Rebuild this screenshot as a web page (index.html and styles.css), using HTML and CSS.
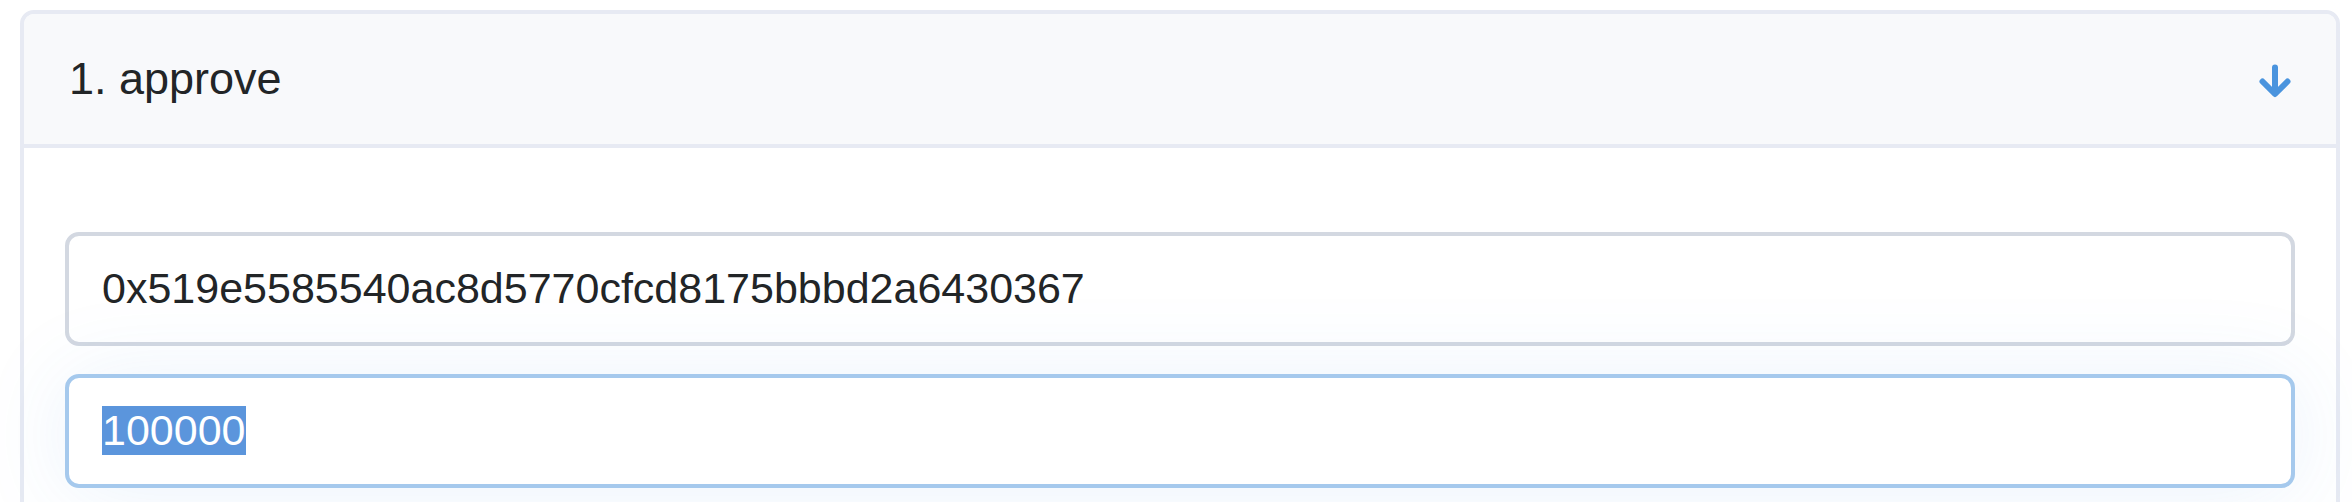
FILE: index.html
```html
<!DOCTYPE html>
<html lang="en">
<head>
<meta charset="utf-8">
<title>Contract functions</title>
<link rel="stylesheet" href="styles.css">
</head>
<body>
<main class="page">
  <section class="card">
    <header class="card-header">
      <h2 class="card-title">1. approve</h2>
      <button class="toggle" type="button" aria-label="Collapse">
        <svg class="toggle-icon" viewBox="0 0 32 34" aria-hidden="true">
          <path d="M16 4.500V29M3.500 18.500L16 31L28.500 18.500"/>
        </svg>
      </button>
    </header>
    <form class="card-body">
      <input class="field" type="text" aria-label="Spender address" value="0x519e5585540ac8d5770cfcd8175bbbd2a6430367">
      <input class="field" id="amount" type="text" aria-label="Amount" value="100000">
    </form>
  </section>
</main>
<script src="script.js"></script>
</body>
</html>
```
FILE: styles.css
```css
* {
  box-sizing: border-box;
}

body {
  margin: 0;
  background: #fff;
  color: #222527;
  font-family: "Liberation Sans", Arial, sans-serif;
}

.page {
  height: 100vh;
  padding: 10px 12px 0 20px;
  overflow: hidden;
}

.card {
  min-height: 100vh;
  border: 4px solid #e7eaf3;
  border-radius: 14px;
}

.card-header {
  display: flex;
  align-items: center;
  justify-content: space-between;
  padding: 39px 45px;
  background: #f8f9fb;
  border-bottom: 4px solid #e7eaf3;
  border-radius: 10px 10px 0 0;
}

.card-title {
  margin: 0;
  font-size: 45px;
  font-weight: 400;
  line-height: 52px;
}

.toggle {
  display: flex;
  padding: 2px 0 0;
  border: 0;
  background: none;
}

.toggle-icon {
  width: 32px;
  height: 34px;
  overflow: visible;
  fill: none;
  stroke: #4a94de;
  stroke-width: 6;
  stroke-linecap: round;
  stroke-linejoin: round;
}

.card-body {
  display: flex;
  flex-direction: column;
  gap: 28px;
  padding: 84px 41px;
}

.field {
  width: 100%;
  height: 114px;
  padding: 0 33px 2px;
  border: 4px solid #d3d8e1;
  border-radius: 14px;
  outline: 0;
  background: #fff;
  color: #222527;
  font: 43px "Liberation Sans", Arial, sans-serif;
}

.field:focus {
  position: relative;
  border-color: #a5c9ed;
  box-shadow: 0 4px 92px rgba(55, 135, 225, 0.1);
}

.field::selection {
  background: #5b95dc;
  color: #fff;
}
```
FILE: script.js
```js
const amount = document.getElementById("amount");
amount.focus();
amount.select();
```
